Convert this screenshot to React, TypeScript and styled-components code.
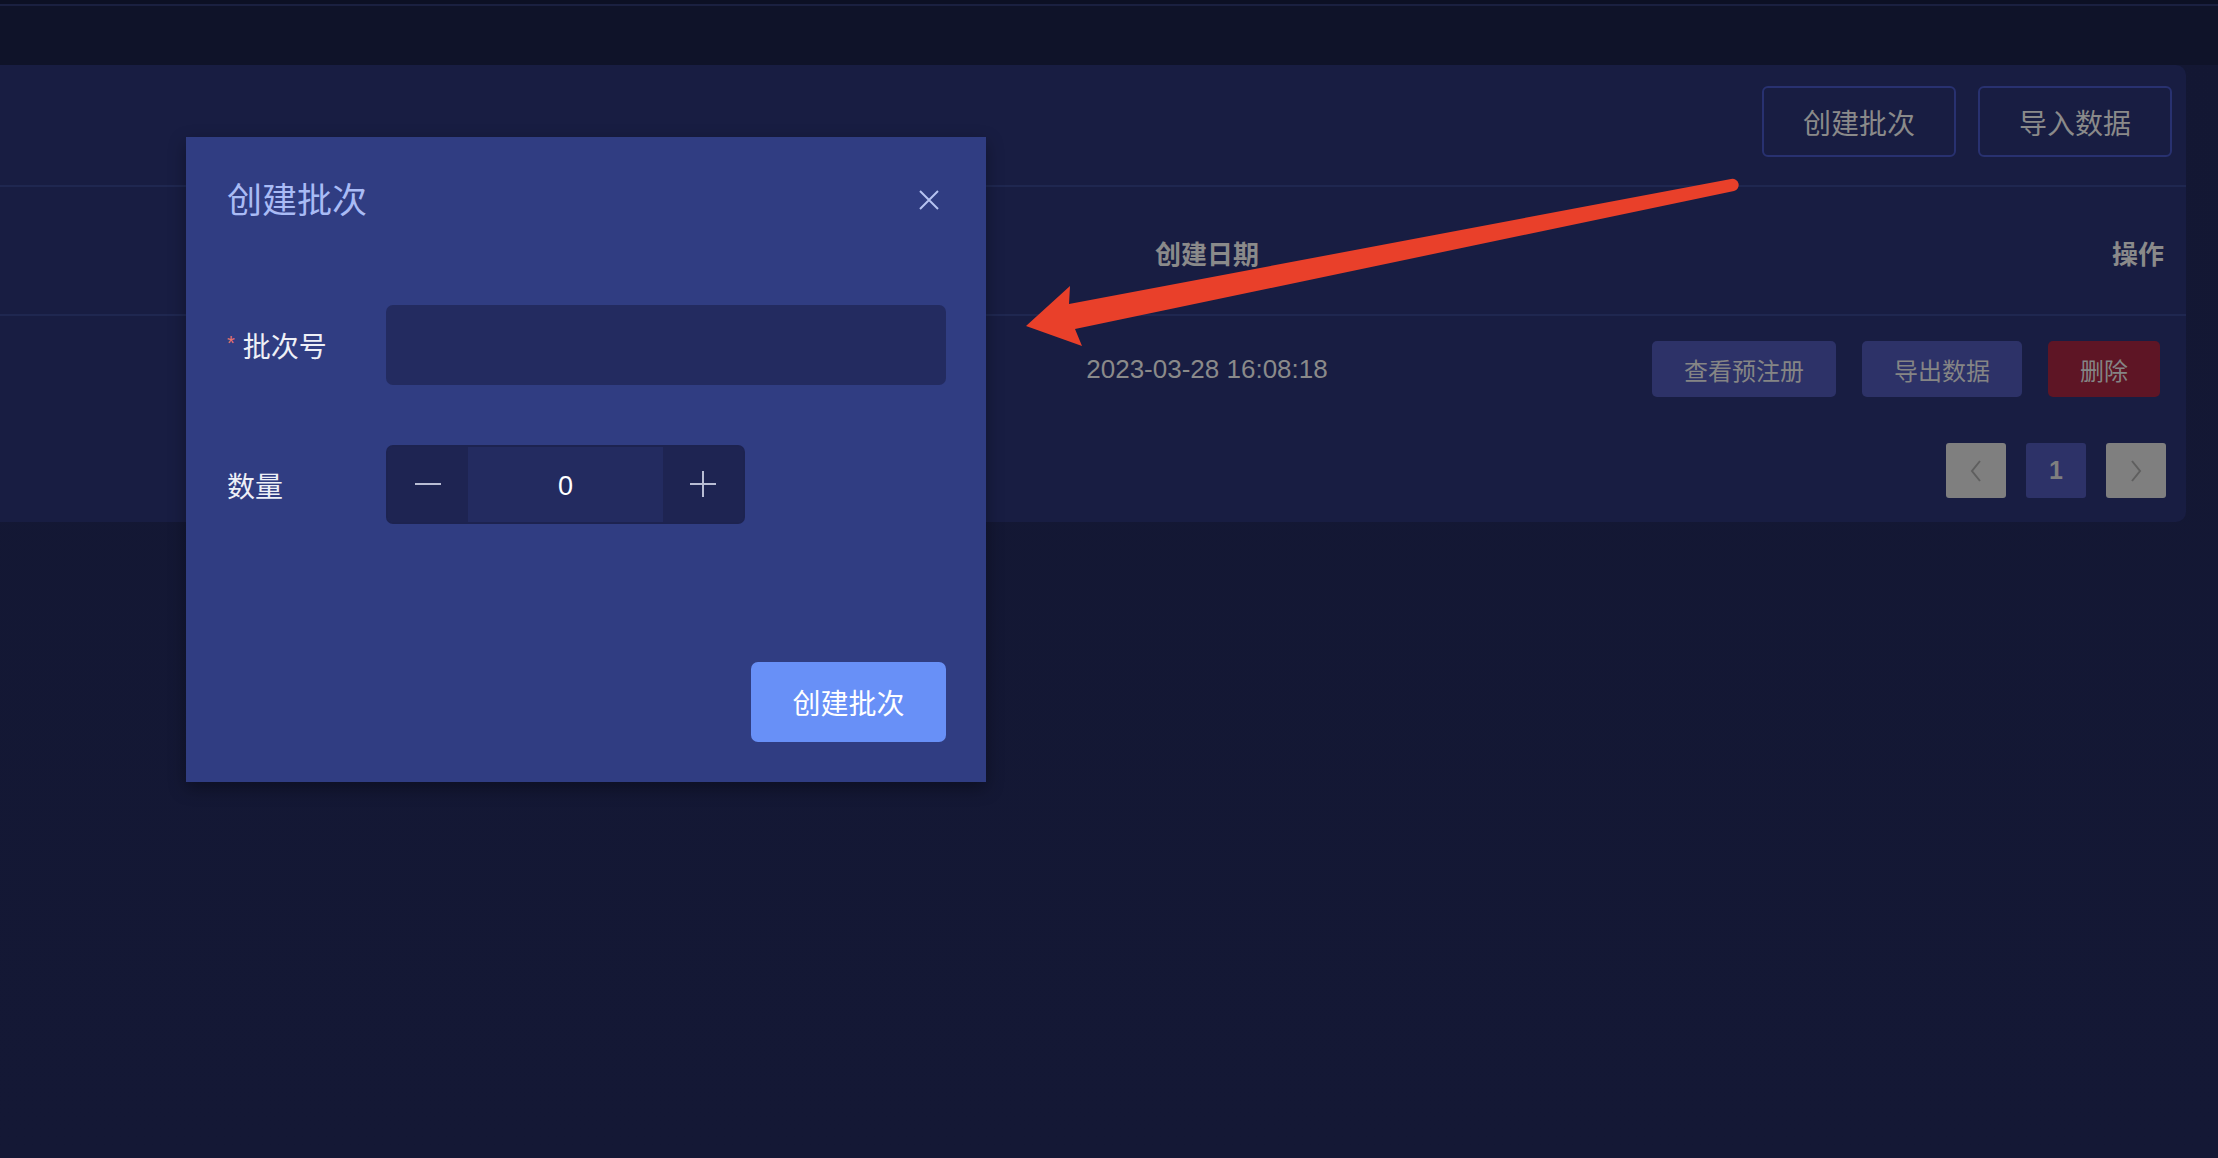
import styled, { createGlobalStyle } from "styled-components";

const GlobalStyle = createGlobalStyle`
    html, body {
        margin: 0;
        padding: 0;
        background: #131733;
    }
    #root {
        min-height: 100vh;
    }
`;

const FONT = `"Liberation Sans", "Noto Sans CJK SC", sans-serif`;

export default function App() {
    return (
        <>
            <GlobalStyle />
            <Page>
                <TopStrip />
                <Panel>
                    <Toolbar>
                        <OutlineButton>创建批次</OutlineButton>
                        <OutlineButton>导入数据</OutlineButton>
                    </Toolbar>
                    <TableHead>
                        <span />
                        <HeadCell>创建日期</HeadCell>
                        <HeadCell align="right">操作</HeadCell>
                    </TableHead>
                    <TableRow>
                        <span />
                        <DateCell>2023-03-28 16:08:18</DateCell>
                        <Actions>
                            <ActionButton>查看预注册</ActionButton>
                            <ActionButton>导出数据</ActionButton>
                            <ActionButton danger>删除</ActionButton>
                        </Actions>
                    </TableRow>
                    <Pager>
                        <PageButton disabledLook>
                            <Chevron dir="left" />
                        </PageButton>
                        <PageButton>1</PageButton>
                        <PageButton disabledLook>
                            <Chevron dir="right" />
                        </PageButton>
                    </Pager>
                </Panel>

                <Modal>
                    <ModalHeader>
                        <ModalTitle>创建批次</ModalTitle>
                        <CloseButton>
                            <svg width="20" height="20" viewBox="0 0 20 20">
                                <path d="M1 1 L19 19 M19 1 L1 19" stroke="#b6c3f2" strokeWidth="2" fill="none" />
                            </svg>
                        </CloseButton>
                    </ModalHeader>
                    <Form>
                        <FormRow>
                            <Label>
                                <Required>*</Required>批次号
                            </Label>
                            <TextInput />
                        </FormRow>
                        <FormRow>
                            <Label>数量</Label>
                            <Stepper>
                                <StepButton>
                                    <svg width="28" height="28" viewBox="0 0 28 28">
                                        <path d="M1 13 H27" stroke="#b9bdd4" strokeWidth="2" />
                                    </svg>
                                </StepButton>
                                <StepValue>0</StepValue>
                                <StepButton>
                                    <svg width="28" height="28" viewBox="0 0 28 28">
                                        <path d="M1 13 H27 M14 0 V26" stroke="#b9bdd4" strokeWidth="2" />
                                    </svg>
                                </StepButton>
                            </Stepper>
                        </FormRow>
                    </Form>
                    <ModalFooter>
                        <SubmitButton>创建批次</SubmitButton>
                    </ModalFooter>
                </Modal>

                <ArrowLayer width="2218" height="1158" viewBox="0 0 2218 1158">
                    <path
                        d="M1026 326 L1070 286 L1069 304 L1731 179 A6 6 0 0 1 1734 191 L1075 329 L1082 346 Z"
                        fill="#e9402a"
                    />
                </ArrowLayer>
            </Page>
        </>
    );
}

const Chevron = ({ dir }: { dir: "left" | "right" }) => (
    <svg width="12" height="22" viewBox="0 0 12 22">
        <path
            d={dir === "left" ? "M10 1 L2 11 L10 21" : "M2 1 L10 11 L2 21"}
            stroke="#5f5f5f"
            strokeWidth="2"
            fill="none"
        />
    </svg>
);

const Page = styled.div`
    position: relative;
    min-height: 100vh;
    background: linear-gradient(180deg, #131733 0%, #141835 100%);
    font-family: ${FONT};
`;

const TopStrip = styled.div`
    height: 61px;
    background: #0f1329;
    border-top: 4px solid #0c1024;
    box-shadow: inset 0 2px 0 #1a2040;
`;

const Panel = styled.div`
    margin-right: 32px;
    background: #181d42;
    border-radius: 0 10px 10px 0;
    display: flex;
    flex-direction: column;
`;

const Toolbar = styled.div`
    height: 122px;
    padding: 21px 14px 0 0;
    box-sizing: border-box;
    display: flex;
    justify-content: flex-end;
    align-items: flex-start;
    gap: 22px;
    border-bottom: 2px solid #1f2750;
`;

const OutlineButton = styled.button`
    width: 194px;
    height: 71px;
    border: 2px solid #283170;
    border-radius: 6px;
    background: transparent;
    color: #8a8a8a;
    font-family: ${FONT};
    font-size: 28px;
`;

const TableHead = styled.div`
    height: 129px;
    box-sizing: border-box;
    display: grid;
    grid-template-columns: 1057px 300px 1fr;
    align-items: center;
    padding: 0 22px 0 0;
    border-bottom: 2px solid #1f2750;
`;

const HeadCell = styled.div<{ align?: string }>`
    text-align: ${(p) => (p.align === "right" ? "right" : "center")};
    font-size: 26px;
    font-weight: bold;
    color: #8a8a8a;
    padding-top: 4px;
`;

const TableRow = styled.div`
    height: 106px;
    box-sizing: border-box;
    display: grid;
    grid-template-columns: 1057px 300px 1fr;
    align-items: center;
    padding: 0 26px 0 0;
`;

const DateCell = styled.div`
    text-align: center;
    font-size: 26px;
    color: #8a8a8a;
`;

const Actions = styled.div`
    display: flex;
    justify-content: flex-end;
    gap: 26px;
`;

const ActionButton = styled.button<{ danger?: boolean }>`
    height: 56px;
    padding: 0 32px;
    border: none;
    border-radius: 5px;
    background: ${(p) => (p.danger ? "#5e1525" : "#2d3268")};
    color: #858585;
    font-family: ${FONT};
    font-size: 24px;
`;

const Pager = styled.div`
    height: 100px;
    box-sizing: border-box;
    display: flex;
    justify-content: flex-end;
    align-items: flex-start;
    gap: 20px;
    padding: 21px 20px 0 0;
`;

const PageButton = styled.div<{ disabledLook?: boolean }>`
    width: 60px;
    height: 55px;
    border-radius: 3px;
    background: ${(p) => (p.disabledLook ? "#7f7f7f" : "#2d3268")};
    color: #7f7f7f;
    font-size: 25px;
    font-weight: bold;
    display: flex;
    align-items: center;
    justify-content: center;
`;

const Modal = styled.div`
    position: absolute;
    left: 186px;
    top: 137px;
    width: 800px;
    height: 645px;
    box-sizing: border-box;
    padding: 41px 40px 40px 41px;
    background: #303d82;
    box-shadow: 0 6px 16px rgba(0, 0, 0, 0.35);
    display: flex;
    flex-direction: column;
`;

const ModalHeader = styled.div`
    height: 44px;
    display: flex;
    align-items: center;
    justify-content: space-between;
`;

const ModalTitle = styled.div`
    font-size: 35px;
    color: #a9bbf5;
    line-height: 44px;
    padding-top: 2px;
`;

const CloseButton = styled.div`
    width: 20px;
    height: 20px;
    margin-right: 7px;
    display: flex;
`;

const Form = styled.div`
    margin-top: 83px;
    display: flex;
    flex-direction: column;
    gap: 60px;
`;

const FormRow = styled.div`
    display: flex;
    align-items: center;
`;

const Label = styled.div`
    width: 159px;
    font-size: 28px;
    color: #eef0f7;
    display: flex;
    align-items: center;
`;

const Required = styled.span`
    color: #e8736c;
    font-size: 20px;
    margin-right: 8px;
    margin-top: -4px;
`;

const TextInput = styled.div`
    flex: 1;
    height: 80px;
    border-radius: 7px;
    background: #232b60;
`;

const Stepper = styled.div`
    width: 359px;
    height: 79px;
    box-sizing: border-box;
    border: 2px solid #1d2350;
    border-radius: 7px;
    background: #232b60;
    display: flex;
    overflow: hidden;
`;

const StepButton = styled.div`
    width: 80px;
    background: #1e2452;
    display: flex;
    align-items: center;
    justify-content: center;
`;

const StepValue = styled.div`
    flex: 1;
    display: flex;
    align-items: center;
    justify-content: center;
    font-size: 27px;
    color: #ffffff;
    padding-top: 3px;
`;

const ModalFooter = styled.div`
    margin-top: auto;
    display: flex;
    justify-content: flex-end;
`;

const SubmitButton = styled.button`
    width: 195px;
    height: 80px;
    border: none;
    border-radius: 7px;
    background: #6890f7;
    color: #ffffff;
    font-family: ${FONT};
    font-size: 28px;
`;

const ArrowLayer = styled.svg`
    position: absolute;
    left: 0;
    top: 0;
    pointer-events: none;
`;
